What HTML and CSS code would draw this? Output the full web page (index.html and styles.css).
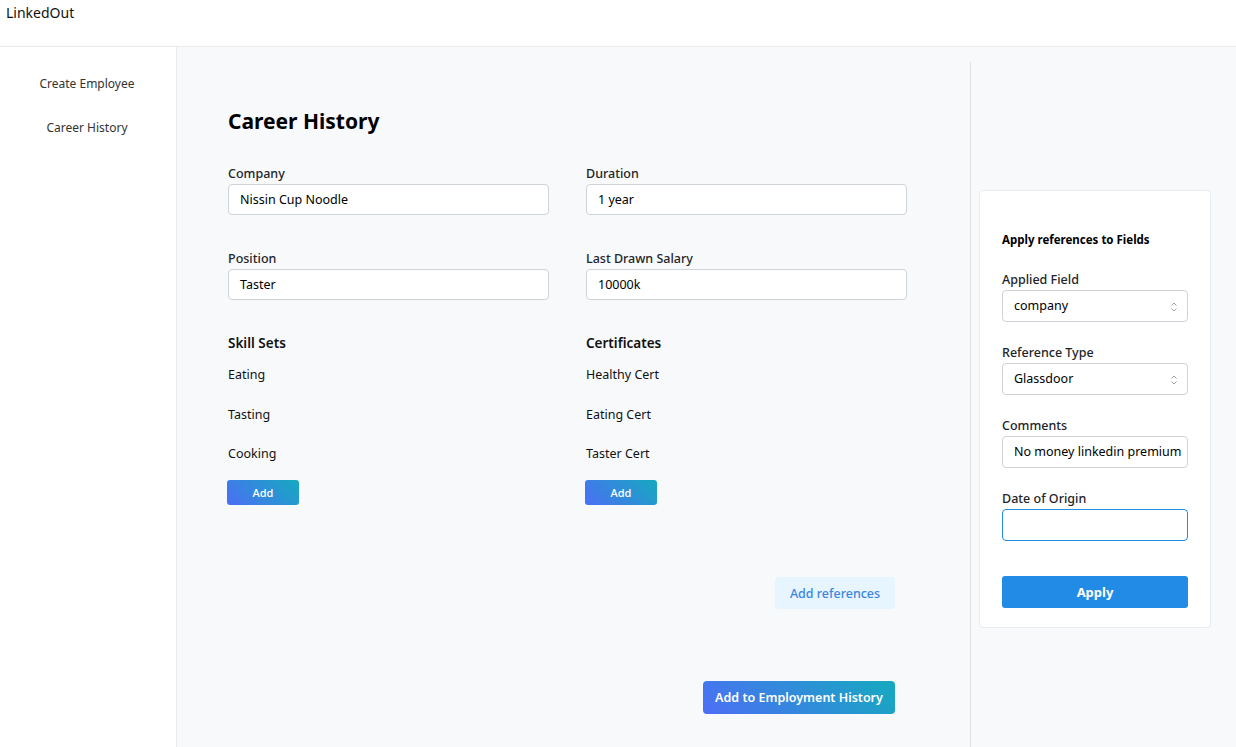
FILE: index.html
```html
<!DOCTYPE html>
<html>
<head>
<meta charset="utf-8">
<link rel="stylesheet" href="styles.css">
</head>
<body>
<header class="topbar">LinkedOut</header>
<div class="layout">
  <nav class="sidebar">
    <a class="nav-item">Create Employee</a>
    <a class="nav-item">Career History</a>
  </nav>
  <main class="main">
    <section class="form-area">
      <h1 class="title">Career History</h1>
      <div class="grid">
        <div class="field">
          <label class="label">Company</label>
          <div class="input">Nissin Cup Noodle</div>
        </div>
        <div class="field">
          <label class="label">Duration</label>
          <div class="input">1 year</div>
        </div>
        <div class="field">
          <label class="label">Position</label>
          <div class="input">Taster</div>
        </div>
        <div class="field">
          <label class="label">Last Drawn Salary</label>
          <div class="input">10000k</div>
        </div>
        <div class="list">
          <div class="list-title">Skill Sets</div>
          <div class="list-item">Eating</div>
          <div class="list-item">Tasting</div>
          <div class="list-item">Cooking</div>
          <button class="btn-add">Add</button>
        </div>
        <div class="list">
          <div class="list-title">Certificates</div>
          <div class="list-item">Healthy Cert</div>
          <div class="list-item">Eating Cert</div>
          <div class="list-item">Taster Cert</div>
          <button class="btn-add">Add</button>
        </div>
      </div>
      <div class="actions">
        <button class="btn-light">Add references</button>
        <button class="btn-primary">Add to Employment History</button>
      </div>
    </section>
    <aside class="aside">
      <div class="card">
        <div class="card-title">Apply references to Fields</div>
        <div class="cfield">
          <label class="label">Applied Field</label>
          <div class="input select">company<span class="chev"><svg width="8" height="12" viewBox="0 0 8 12"><path d="M1.5 4.5 L4 2 L6.5 4.5 M1.5 7.5 L4 10 L6.5 7.5" fill="none" stroke="#9aa0a8" stroke-width="1"/></svg></span></div>
        </div>
        <div class="cfield">
          <label class="label">Reference Type</label>
          <div class="input select">Glassdoor<span class="chev"><svg width="8" height="12" viewBox="0 0 8 12"><path d="M1.5 4.5 L4 2 L6.5 4.5 M1.5 7.5 L4 10 L6.5 7.5" fill="none" stroke="#9aa0a8" stroke-width="1"/></svg></span></div>
        </div>
        <div class="cfield">
          <label class="label">Comments</label>
          <div class="input">No money linkedin premium</div>
        </div>
        <div class="cfield last">
          <label class="label">Date of Origin</label>
          <div class="input focus"></div>
        </div>
        <button class="btn-apply">Apply</button>
      </div>
    </aside>
  </main>
</div>
</body>
</html>
```

FILE: styles.css
```css
* { box-sizing: border-box; }
html, body { margin: 0; padding: 0; }
body {
  font-family: "Noto Sans", "Open Sans", sans-serif;
  color: #000;
  background: #fff;
  width: 1236px;
  height: 747px;
  overflow: hidden;
}
.topbar {
  height: 47px;
  border-bottom: 1px solid #e9ecef;
  padding: 4px 6px;
  font-size: 14px;
  line-height: 18px;
  color: #111;
}
.layout {
  display: flex;
  height: 700px;
}
.sidebar {
  flex: 0 0 177px;
  width: 177px;
  border-right: 1px solid #e9ecef;
  display: flex;
  flex-direction: column;
  align-items: center;
  padding-top: 27px;
  gap: 24px;
  background: #fff;
}
.nav-item {
  font-size: 12px;
  line-height: 20px;
  color: #333;
  padding-right: 2px;
}
.main {
  flex: 1;
  min-width: 0;
  background: #f8f9fb;
  display: flex;
  padding-top: 15px;
}
.form-area {
  flex: 0 0 793px;
  width: 793px;
  padding: 43px 64px 0 51px;
}
.title {
  margin: 0 0 27px;
  font-size: 21px;
  line-height: 32px;
  font-weight: 700;
}
.grid {
  display: grid;
  grid-template-columns: 321px 321px;
  column-gap: 37px;
}
.field { margin-bottom: 34px; }
.field:nth-child(3), .field:nth-child(4) { margin-bottom: 33px; }
.label {
  display: block;
  font-size: 12.5px;
  line-height: 20px;
  color: #212529;
  font-weight: 500;
}
.input {
  height: 31px;
  background: #fff;
  border: 1px solid #ced4da;
  border-radius: 4px;
  padding: 0 11px;
  font-size: 12.5px;
  line-height: 29px;
  color: #000;
  position: relative;
  white-space: nowrap;
  overflow: hidden;
}
.list-title {
  font-size: 13.5px;
  font-weight: 600;
  line-height: 20px;
  color: #111;
  margin-bottom: 13px;
}
.list-item {
  font-size: 12.5px;
  line-height: 18px;
  color: #111;
  margin-bottom: 21.5px;
}
.list-item:nth-of-type(4) { margin-bottom: 17px; }
.btn-add {
  display: block;
  width: 72px;
  height: 25px;
  border: none;
  border-radius: 3px;
  background: linear-gradient(45deg, #4c6ef5, #15aabf);
  color: #fff;
  font-family: inherit;
  font-size: 11px;
  font-weight: 500;
  margin-left: -1px;
  padding: 0;
}
.actions {
  display: flex;
  flex-direction: column;
  align-items: flex-end;
  padding-right: 11px;
  margin-top: 72px;
}
.btn-light {
  width: 120px;
  height: 32px;
  border: none;
  border-radius: 4px;
  background: #e7f5ff;
  color: #3a86e0;
  font-family: inherit;
  font-size: 12.5px;
  font-weight: 500;
  padding: 0;
}
.btn-primary {
  margin-top: 72px;
  width: 192px;
  height: 33px;
  border: none;
  border-radius: 4px;
  background: linear-gradient(45deg, #4c6ef5, #15aabf);
  color: #fff;
  font-family: inherit;
  font-size: 12.5px;
  font-weight: 600;
  padding: 0;
}
.aside {
  flex: 1;
  border-left: 1px solid #dee2e6;
  padding: 128px 0 0 8px;
}
.card {
  width: 232px;
  background: #fff;
  border: 1px solid #e9ecef;
  border-radius: 4px;
  padding: 41px 22px 20px 22px;
  height: 438px;
}
.card-title {
  font-size: 11.5px;
  font-weight: 700;
  line-height: 16px;
  margin-bottom: 22px;
}
.cfield { margin-bottom: 21px; }
.cfield .input { height: 32px; line-height: 30px; }
.cfield.last { margin-bottom: 35px; }
.select { padding-right: 24px; }
.chev {
  position: absolute;
  right: 9px;
  top: 10px;
  line-height: 0;
}
.focus { border-color: #228be6; }
.btn-apply {
  display: block;
  width: 186px;
  height: 32px;
  border: none;
  border-radius: 3px;
  background: #228be6;
  color: #fff;
  font-family: inherit;
  font-size: 13px;
  font-weight: 700;
  padding: 0;
}
```
